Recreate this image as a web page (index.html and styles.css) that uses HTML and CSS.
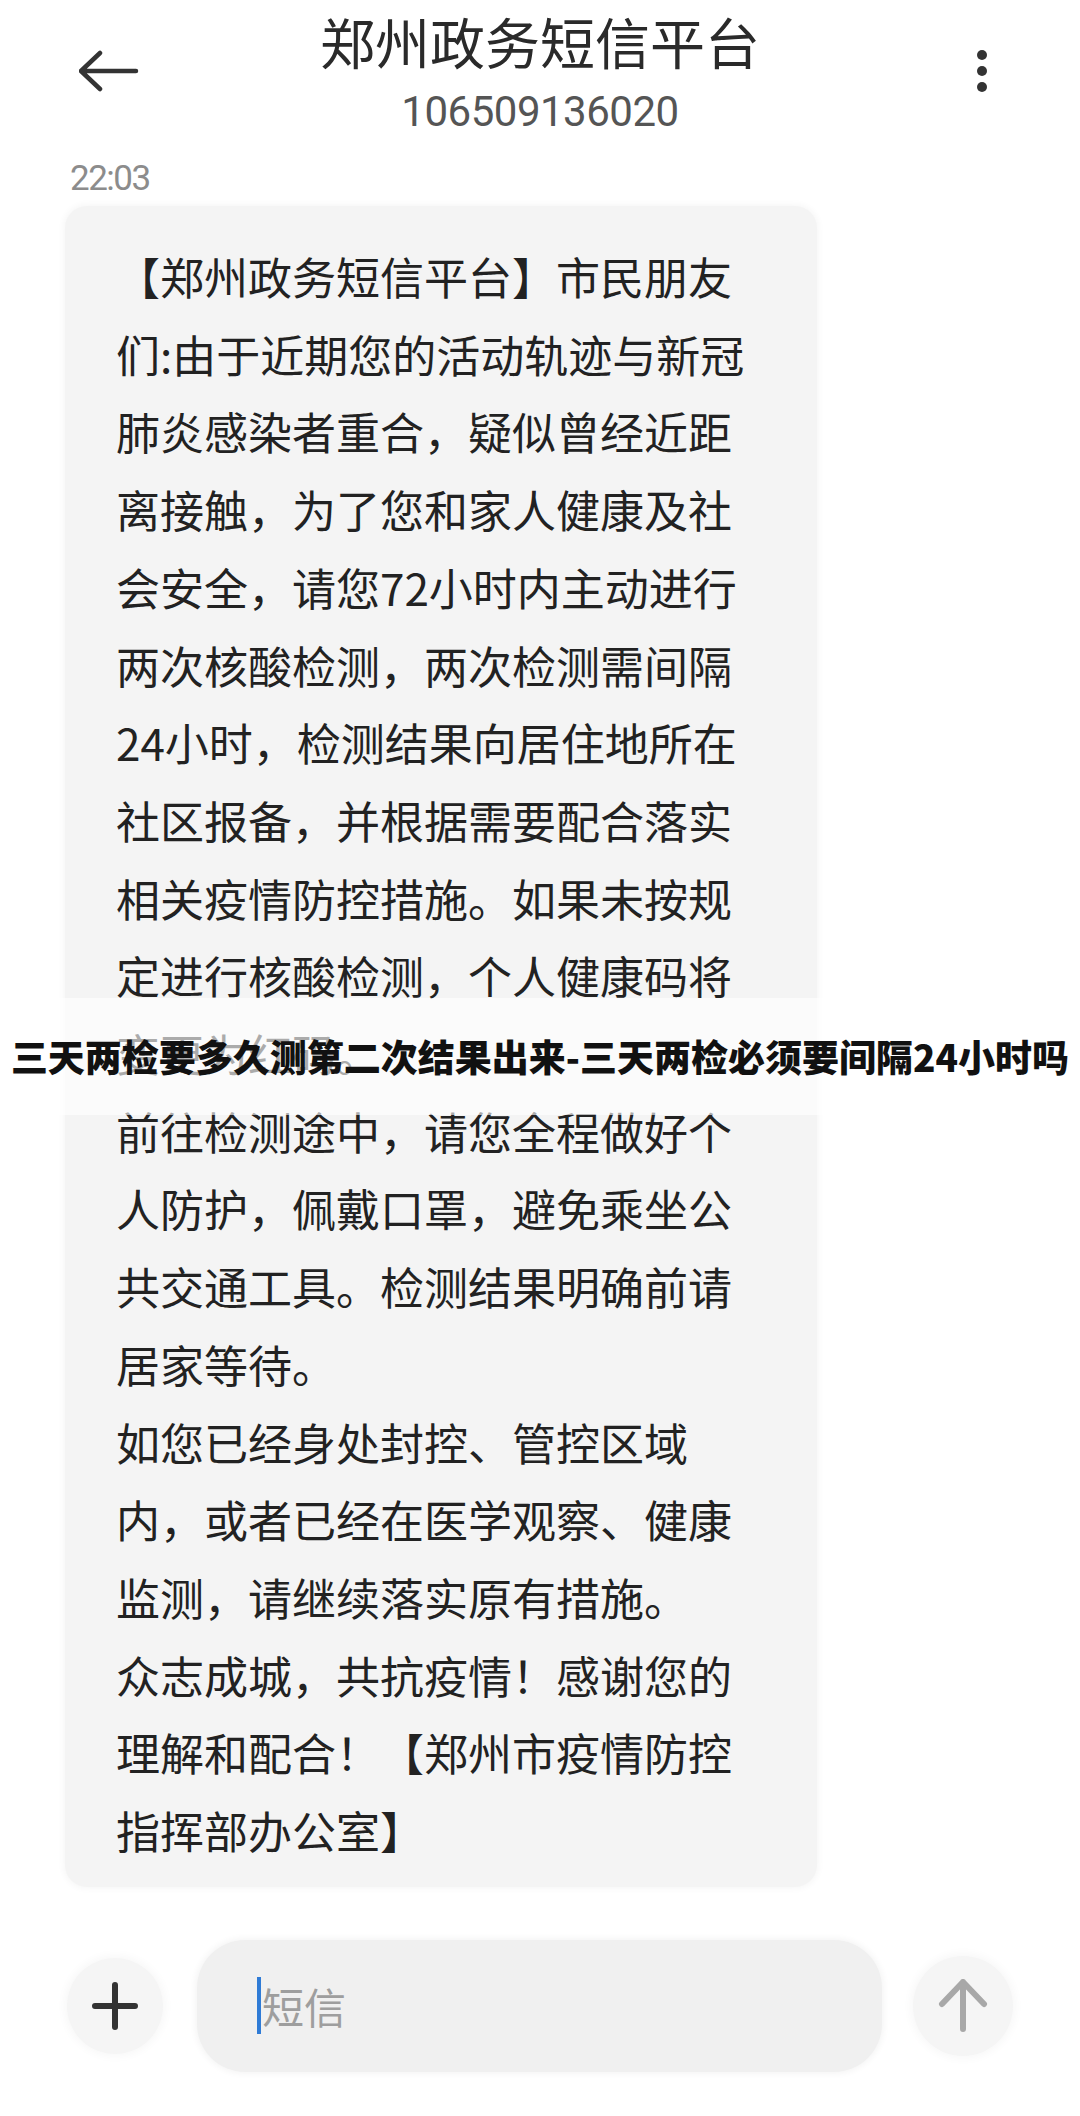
FILE: index.html
```html
<!DOCTYPE html>
<html lang="zh-CN">
<head>
<meta charset="utf-8">
<title>郑州政务短信平台</title>
<link rel="stylesheet" href="styles.css">
</head>
<body>
<div class="screen">
  <header class="topbar">
    <div class="side left">
      <svg class="back" width="60" height="44" viewBox="0 0 60 44"><path d="M2 22 H57 M21 4 L2 22 L21 40" fill="none" stroke="#333" stroke-width="4.5" stroke-linecap="round" stroke-linejoin="round"/></svg>
    </div>
    <div class="center">
      <div class="title">郑州政务短信平台</div>
      <div class="number">106509136020</div>
    </div>
    <div class="side right">
      <svg class="dots" width="12" height="46" viewBox="0 0 12 46"><circle cx="6" cy="6" r="5" fill="#333"/><circle cx="6" cy="22" r="5" fill="#333"/><circle cx="6" cy="38" r="5" fill="#333"/></svg>
    </div>
  </header>

  <div class="time">22:03</div>

  <div class="bubble">
    <div class="ln">【郑州政务短信平台】市民朋友</div>
    <div class="ln">们:由于近期您的活动轨迹与新冠</div>
    <div class="ln">肺炎感染者重合，疑似曾经近距</div>
    <div class="ln">离接触，为了您和家人健康及社</div>
    <div class="ln">会安全，请您72小时内主动进行</div>
    <div class="ln">两次核酸检测，两次检测需间隔</div>
    <div class="ln">24小时，检测结果向居住地所在</div>
    <div class="ln">社区报备，并根据需要配合落实</div>
    <div class="ln">相关疫情防控措施。如果未按规</div>
    <div class="ln">定进行核酸检测，个人健康码将</div>
    <div class="ln">变更为红码。</div>
    <div class="ln">前往检测途中，请您全程做好个</div>
    <div class="ln">人防护，佩戴口罩，避免乘坐公</div>
    <div class="ln">共交通工具。检测结果明确前请</div>
    <div class="ln">居家等待。</div>
    <div class="ln">如您已经身处封控、管控区域</div>
    <div class="ln">内，或者已经在医学观察、健康</div>
    <div class="ln">监测，请继续落实原有措施。</div>
    <div class="ln">众志成城，共抗疫情！感谢您的</div>
    <div class="ln">理解和配合！【郑州市疫情防控</div>
    <div class="ln">指挥部办公室】</div>
  </div>

  <div class="composer">
    <div class="round plus">
      <svg width="48" height="48" viewBox="0 0 48 48"><path d="M4 24 H44 M24 3 V45" fill="none" stroke="#333" stroke-width="6" stroke-linecap="round"/></svg>
    </div>
    <div class="input">
      <span class="cursor"></span><span class="placeholder">短信</span>
    </div>
    <div class="round send">
      <svg width="50" height="54" viewBox="0 0 50 54"><path d="M25 3 V50 M4 25 L25 3 L46 25" fill="none" stroke="#a8a8a8" stroke-width="6" stroke-linecap="round" stroke-linejoin="round"/></svg>
    </div>
  </div>

  <div class="banner">
    <div class="banner-text">三天两检要多久测第二次结果出来-三天两检必须要间隔24小时吗</div>
  </div>
</div>
</body>
</html>
```

FILE: styles.css
```css
html, body {
  margin: 0;
  padding: 0;
  background: #ffffff;
}

.screen {
  position: relative;
  width: 1080px;
  height: 2116px;
  overflow: hidden;
  background: #ffffff;
  font-family: "Noto Sans CJK SC", "Noto Sans", sans-serif;
}

.topbar {
  display: flex;
  align-items: flex-start;
  padding-top: 10px;
}

.side {
  width: 160px;
  flex: none;
}

.side.left .back {
  display: block;
  margin-top: 39px;
  margin-left: 79px;
}

.side.right .dots {
  display: block;
  margin-top: 39px;
  margin-left: 56px;
}

.center {
  flex: 1;
  display: flex;
  flex-direction: column;
  align-items: center;
}

.title {
  font-size: 55px;
  line-height: 60px;
  color: #2a2a2a;
  white-space: nowrap;
}

.number {
  margin-top: 17px;
  font-family: Roboto, "Liberation Sans", sans-serif;
  font-size: 42px;
  line-height: 50px;
  color: #555555;
  letter-spacing: -0.5px;
}

.time {
  margin-top: 22px;
  margin-left: 70px;
  font-family: Roboto, "Liberation Sans", sans-serif;
  font-size: 35px;
  line-height: 40px;
  letter-spacing: -1.5px;
  color: #8c8c8c;
}

.bubble {
  margin-top: 7px;
  margin-left: 65px;
  width: 752px;
  box-sizing: border-box;
  padding: 32px 20px 17px 51px;
  background: #f4f4f4;
  border-radius: 22px;
  box-shadow: 0 0 6px 2px #f7f7f7;
}

.ln {
  font-size: 44px;
  line-height: 77.7px;
  color: #222222;
  white-space: nowrap;
}

.composer {
  margin-top: 53px;
  height: 132px;
  display: flex;
  align-items: center;
  padding-left: 67px;
}

.round {
  flex: none;
  border-radius: 50%;
  display: flex;
  align-items: center;
  justify-content: center;
  background: #f5f5f5;
  box-shadow: 0 0 8px 3px #f8f8f8;
}

.plus {
  width: 96px;
  height: 96px;
}

.send {
  width: 100px;
  height: 100px;
  margin-left: 31px;
}

.input {
  flex: none;
  margin-left: 34px;
  width: 685px;
  height: 132px;
  box-sizing: border-box;
  padding-left: 60px;
  border-radius: 48px;
  background: #f0f0f0;
  box-shadow: 0 0 6px 2px #f5f5f5;
  display: flex;
  align-items: center;
}

.cursor {
  display: block;
  width: 4px;
  height: 57px;
  background: #2f7bd6;
  margin-right: 1px;
}

.placeholder {
  font-size: 42px;
  line-height: 57px;
  color: #9e9e9e;
}

.banner {
  position: absolute;
  left: 0;
  top: 998px;
  width: 1080px;
  height: 117px;
  background: rgba(255, 255, 255, 0.62);
  display: flex;
  align-items: center;
  justify-content: center;
}

.banner-text {
  font-size: 37px;
  font-weight: 900;
  line-height: 44px;
  color: #111111;
  white-space: nowrap;
  margin-top: -2px;
}
```
